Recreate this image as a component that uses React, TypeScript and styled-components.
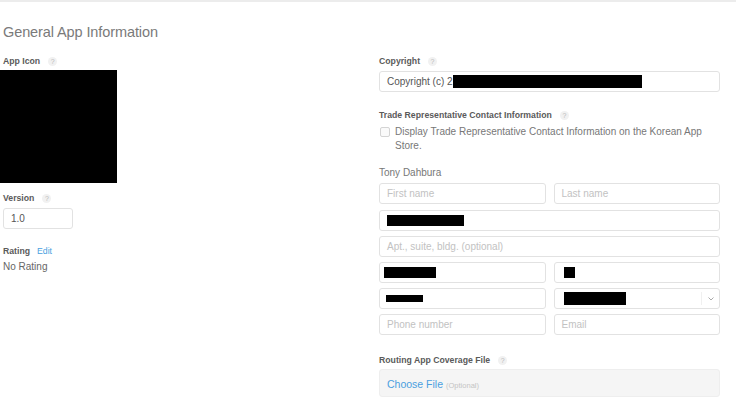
import React from "react";
import styled, { createGlobalStyle } from "styled-components";

const Global = createGlobalStyle`
  html, body { margin: 0; padding: 0; background: #fff; }
  body { font-family: "Liberation Sans", Arial, sans-serif; color: #333; }
  * { box-sizing: border-box; }
`;

const Page = styled.div`
  width: 736px;
  height: 415px;
  overflow: hidden;
  background: #fff;
`;

const TopRule = styled.div`
  height: 2px;
  background: #ececec;
`;

const Heading = styled.h1`
  margin: 0;
  padding: 22px 0 0 3px;
  height: 52px;
  font-size: 14.5px;
  font-weight: normal;
  color: #7a7a7a;
  letter-spacing: -0.1px;
`;

const Columns = styled.div`
  display: grid;
  grid-template-columns: 379px 341px;
`;

const Column = styled.div`
  display: flex;
  flex-direction: column;
`;

const Label = styled.div<{ $mt?: number; $ml?: number }>`
  display: flex;
  align-items: center;
  gap: 8px;
  height: 14px;
  margin-top: ${(p) => p.$mt ?? 0}px;
  margin-left: ${(p) => p.$ml ?? 0}px;
  font-size: 8.7px;
  font-weight: bold;
  color: #5a5a5a;
`;

const Help = styled.span`
  display: inline-flex;
  align-items: center;
  justify-content: center;
  width: 9px;
  height: 9px;
  border-radius: 50%;
  background: #f1f1f1;
  color: #bbb;
  font-size: 7px;
  font-weight: normal;
`;

const EditLink = styled.span`
  font-weight: normal;
  color: #4a9fe0;
  font-size: 8.7px;
  margin-left: -1px;
`;

const IconBox = styled.div`
  width: 117px;
  height: 113px;
  background: #000;
  margin-top: 2px;
`;

const Field = styled.div<{ $w?: number; $mt?: number; $ml?: number }>`
  display: flex;
  align-items: center;
  height: 21px;
  width: ${(p) => (p.$w ? `${p.$w}px` : "100%")};
  margin-top: ${(p) => p.$mt ?? 0}px;
  margin-left: ${(p) => p.$ml ?? 0}px;
  padding: 0 7px;
  border: 1px solid #e2e2e2;
  border-radius: 3px;
  background: #fff;
  font-size: 10px;
  color: #555;
  position: relative;
`;

const Placeholder = styled.span`
  color: #c2c2c2;
`;

const Redact = styled.span<{ $w: number; $h?: number; $ml?: number }>`
  display: inline-block;
  width: ${(p) => p.$w}px;
  height: ${(p) => p.$h ?? 11}px;
  margin-left: ${(p) => p.$ml ?? 0}px;
  background: #000;
`;

const Chevron = styled.span`
  position: absolute;
  right: 0;
  top: 3px;
  bottom: 3px;
  width: 18px;
  border-left: 1px solid #f0f0f0;
  display: flex;
  align-items: center;
  justify-content: center;
`;

const Text = styled.div<{ $mt?: number; $ml?: number; $color?: string }>`
  font-size: 10px;
  line-height: 14px;
  color: ${(p) => p.$color ?? "#666"};
  margin-top: ${(p) => p.$mt ?? 0}px;
  margin-left: ${(p) => p.$ml ?? 0}px;
`;

const CheckRow = styled.div`
  display: flex;
  gap: 5px;
  margin-top: 3px;
  font-size: 10px;
  line-height: 14px;
  color: #777;
`;

const Checkbox = styled.span`
  flex: none;
  width: 10px;
  height: 10px;
  margin-top: 2px;
  margin-left: 1px;
  border: 1px solid #d4d4d4;
  border-radius: 2px;
  background: #fafafa;
`;

const Row = styled.div<{ $mt?: number }>`
  display: grid;
  grid-template-columns: 1fr 1fr;
  gap: 8px;
  margin-top: ${(p) => p.$mt ?? 5}px;
`;

const FileBox = styled.div`
  display: flex;
  align-items: baseline;
  gap: 3px;
  height: 28px;
  padding: 8px 7px 0;
  margin-top: 2px;
  border: 1px solid #eee;
  border-radius: 3px;
  background: #f5f5f5;
`;

const ChooseFile = styled.span`
  color: #4a9fe0;
  font-size: 10.5px;
`;

const Optional = styled.span`
  color: #c4c4c4;
  font-size: 7.5px;
`;

const Q = () => <Help>?</Help>;

export default function App() {
  return (
    <Page>
      <Global />
      <TopRule />
      <Heading>General App Information</Heading>
      <Columns>
        <Column>
          <Label $ml={3}>
            App Icon <Q />
          </Label>
          <IconBox />
          <Label $ml={3} $mt={8}>
            Version <Q />
          </Label>
          <Field $w={70} $ml={3} $mt={3}>
            1.0
          </Field>
          <Label $ml={3} $mt={15}>
            Rating <EditLink>Edit</EditLink>
          </Label>
          <Text $ml={3} $mt={2}>
            No Rating
          </Text>
        </Column>
        <Column>
          <Label>
            Copyright <Q />
          </Label>
          <Field $mt={3}>
            Copyright (c) 2<Redact $w={189} $h={13} />
          </Field>
          <Label $mt={16}>
            Trade Representative Contact Information <Q />
          </Label>
          <CheckRow>
            <Checkbox />
            <span>
              Display Trade Representative Contact Information on the Korean App Store.
            </span>
          </CheckRow>
          <Text $mt={13} $color="#777">
            Tony Dahbura
          </Text>
          <Row $mt={3}>
            <Field>
              <Placeholder>First name</Placeholder>
            </Field>
            <Field>
              <Placeholder>Last name</Placeholder>
            </Field>
          </Row>
          <Field $mt={6}>
            <Redact $w={77} $h={11} />
          </Field>
          <Field $mt={5}>
            <Placeholder>Apt., suite, bldg. (optional)</Placeholder>
          </Field>
          <Row>
            <Field>
              <Redact $w={52} $h={11} $ml={-3} />
            </Field>
            <Field>
              <Redact $w={11} $h={11} $ml={2} />
            </Field>
          </Row>
          <Row>
            <Field>
              <Redact $w={37} $h={7} $ml={-1} />
            </Field>
            <Field>
              <Redact $w={62} $h={13} $ml={2} />
              <Chevron>
                <svg width="6" height="4" viewBox="0 0 6 4">
                  <path d="M0.5 0.5 L3 3 L5.5 0.5" fill="none" stroke="#aaa" strokeWidth="1" />
                </svg>
              </Chevron>
            </Field>
          </Row>
          <Row>
            <Field>
              <Placeholder>Phone number</Placeholder>
            </Field>
            <Field>
              <Placeholder>Email</Placeholder>
            </Field>
          </Row>
          <Label $mt={18}>
            Routing App Coverage File <Q />
          </Label>
          <FileBox>
            <ChooseFile>Choose File</ChooseFile>
            <Optional>(Optional)</Optional>
          </FileBox>
        </Column>
      </Columns>
    </Page>
  );
}
